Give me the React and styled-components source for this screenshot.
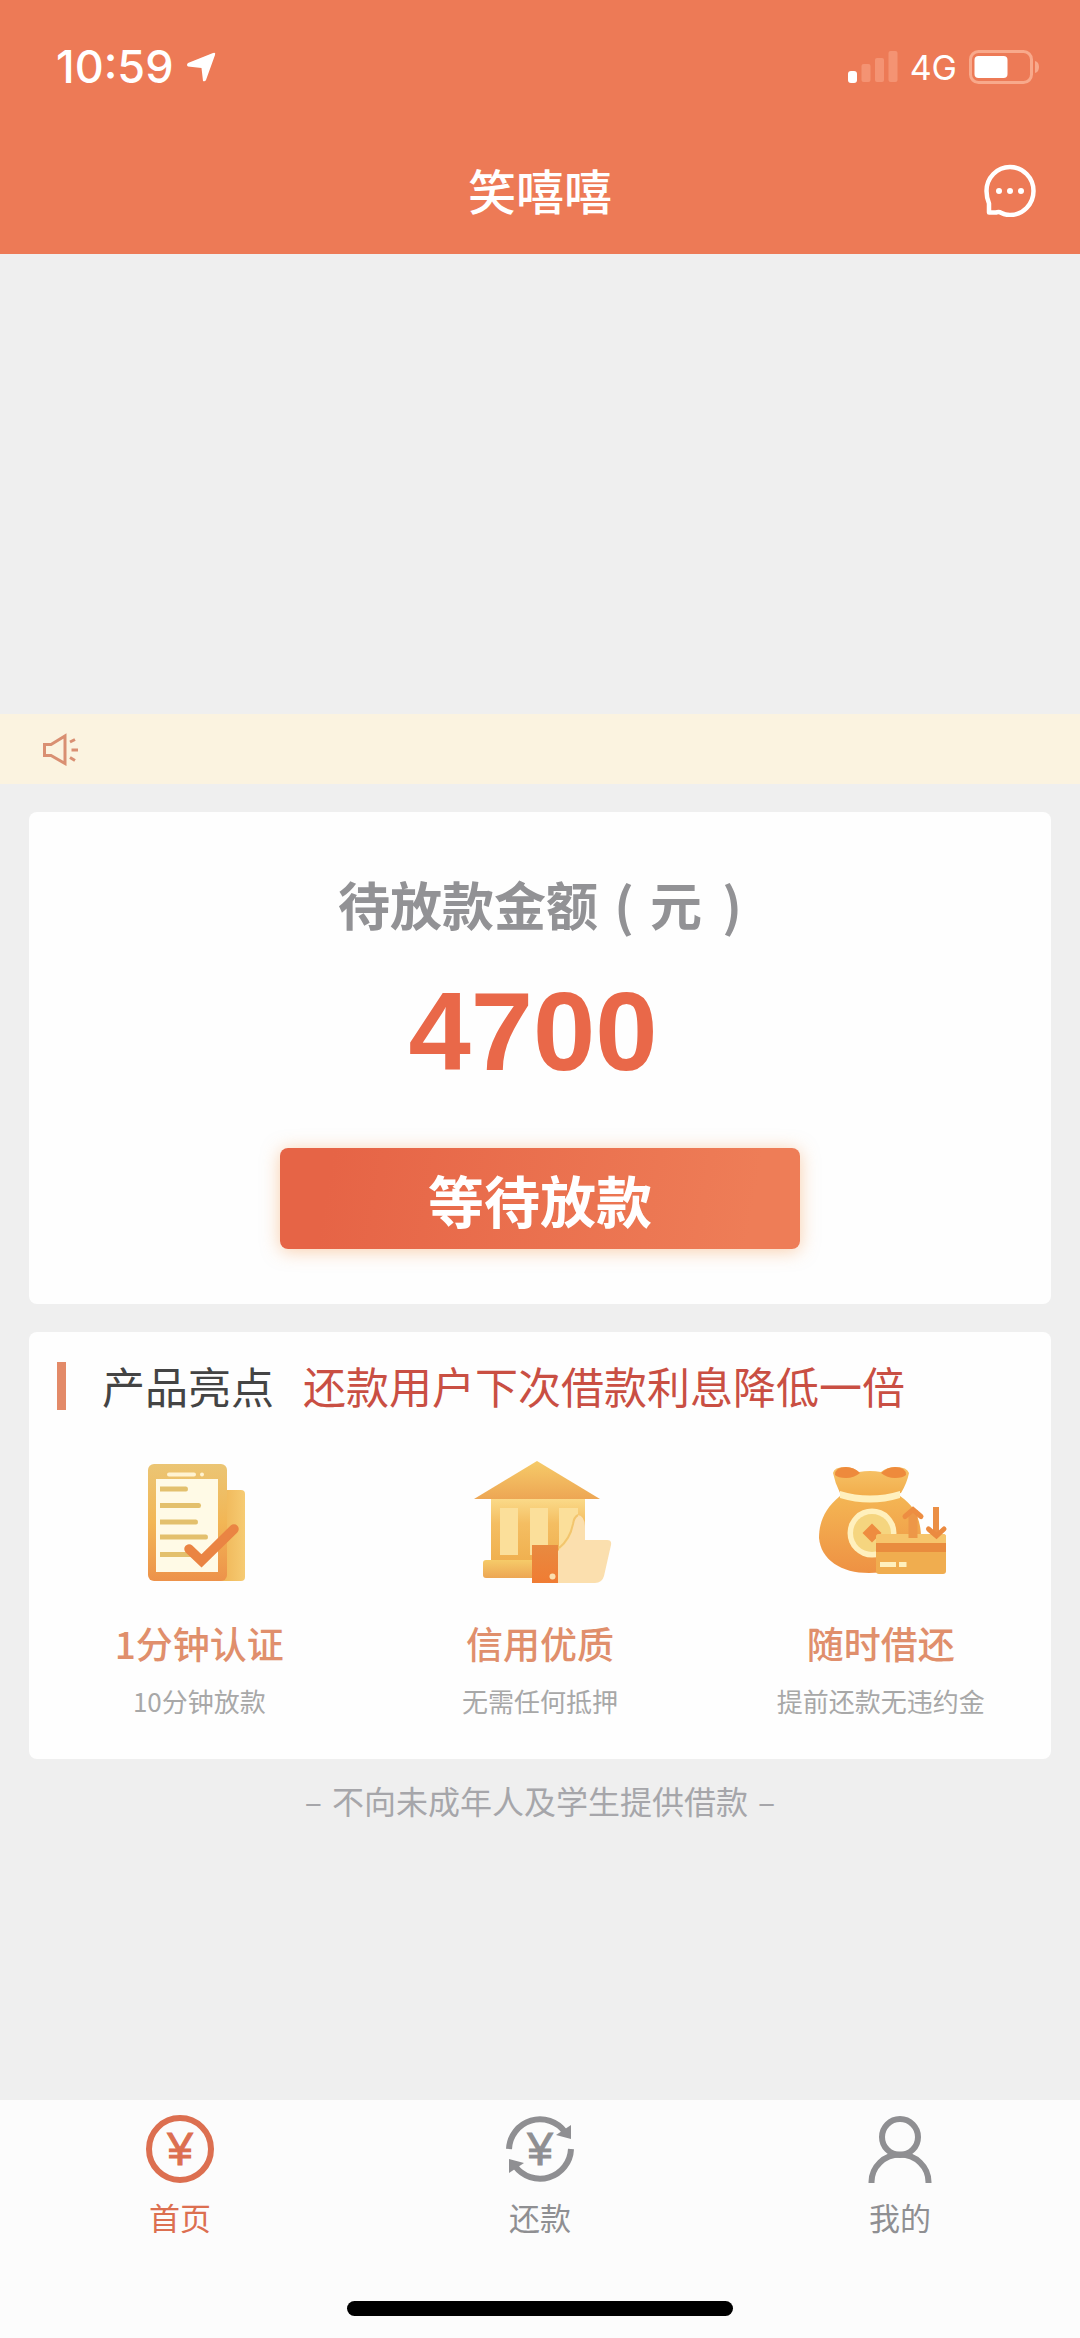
import React from 'react'
import styled, { createGlobalStyle } from 'styled-components'

const GlobalStyle = createGlobalStyle`
  * {
    box-sizing: border-box;
  }

  body {
    margin: 0;
    background-color: #efefef;
    font-family: "Noto Sans CJK SC", "Noto Sans", sans-serif;
  }

  h1, h2, h3, p {
    margin: 0;
  }

  svg {
    display: block;
  }
`

const Page = styled.div`
  display: flex;
  flex-direction: column;
  min-height: 100vh;
`

const Header = styled.header`
  padding-bottom: 8px;
  background-color: #ed7a56;
  color: #fff;
`

const StatusBar = styled.div`
  display: flex;
  justify-content: space-between;
  align-items: center;
  height: 134px;
  padding: 0 40px 0 56px;
  font-family: Inter, sans-serif;
`

const StatusGroup = styled.div`
  display: flex;
  align-items: center;
  gap: 12px;
`

const Time = styled.span`
  font-size: 45px;
  font-weight: 500;
  line-height: 54px;
`

const Network = styled.span`
  font-size: 34px;
`

const TitleBar = styled.div`
  display: grid;
  grid-template-columns: 1fr auto 1fr;
  align-items: center;
  height: 112px;
  padding: 0 44px;
`

const Title = styled.h1`
  grid-column: 2;
  padding-bottom: 2px;
  font-size: 48px;
  font-weight: 500;
  line-height: 60px;
`

const ChatButton = styled.button`
  justify-self: end;
  padding: 0;
  border: none;
  background: none;
  color: inherit;
  cursor: pointer;
`

const Banner = styled.section`
  height: 460px;
`

const Notice = styled.div`
  display: flex;
  align-items: center;
  height: 70px;
  padding: 0 42px;
  background-color: #fbf3e0;
`

const Main = styled.main`
  flex: 1;
`

const Card = styled.section`
  margin: 28px 29px 0;
  border-radius: 8px;
  background-color: #fefefe;
`

const LoanCard = styled(Card)`
  display: flex;
  flex-direction: column;
  align-items: center;
  padding: 62px 28px 55px;
`

const LoanTitle = styled.h2`
  color: #929295;
  font-size: 52px;
  font-weight: 700;
  line-height: 60px;
`

const Paren = styled.span`
  display: inline-block;
  width: 52px;
  text-align: center;

  &:last-child {
    width: 40px;
    text-align: right;
  }
`

const Amount = styled.p`
  margin-top: 42px;
  padding-right: 14px;
  color: #e96849;
  font-family: "Liberation Sans", Arial, sans-serif;
  font-size: 112px;
  font-weight: 700;
  line-height: 112px;
`

const WaitButton = styled.button`
  width: 520px;
  max-width: 100%;
  height: 101px;
  margin-top: 60px;
  padding: 0;
  border: none;
  border-radius: 8px;
  background: linear-gradient(100deg, #e66446 10%, #ee7d57 90%);
  box-shadow: 0 2px 18px rgba(245, 160, 90, 0.5);
  color: #fff;
  font-family: inherit;
  font-size: 56px;
  font-weight: 700;
  line-height: 60px;
  cursor: pointer;
`

const FeatureCard = styled(Card)`
  padding: 30px 0 42px;
`

const FeatureHeader = styled.div`
  display: flex;
  align-items: center;
  height: 48px;
  padding: 0 28px;
  gap: 29px;
  font-size: 43px;
  line-height: 44px;

  &::before {
    content: '';
    width: 9px;
    height: 48px;
    margin-right: 7px;
    background-color: #e38a68;
  }
`

const FeatureTitle = styled.h2`
  padding-bottom: 3px;
  color: #444;
  font-size: inherit;
  font-weight: 400;
`

const FeatureHint = styled.p`
  padding-bottom: 3px;
  color: #c94f43;
`

const FeatureList = styled.div`
  display: grid;
  grid-template-columns: repeat(3, 1fr);
  margin-top: 46px;
`

const Feature = styled.div`
  display: flex;
  flex-direction: column;
  align-items: center;
`

const FeatureName = styled.h3`
  margin-top: 33px;
  color: #e08f6c;
  font-size: 37px;
  font-weight: 500;
  line-height: 44px;
`

const FeatureText = styled.p`
  margin-top: 20px;
  color: #a8a8a8;
  font-size: 26px;
  line-height: 32px;
`

const Disclaimer = styled.p`
  display: flex;
  justify-content: center;
  gap: 10px;
  margin-top: 21px;
  color: #a6a6aa;
  font-size: 32px;
  line-height: 40px;
`

const TabBar = styled.nav`
  padding: 13px 0 22px;
  background-color: #fcfcfc;
`

const Tabs = styled.div`
  display: grid;
  grid-template-columns: repeat(3, 1fr);
`

const Tab = styled.a`
  display: flex;
  flex-direction: column;
  align-items: center;
  gap: 12px;
  color: ${props => (props.$active ? '#dc6f50' : '#8f8f92')};
  font-size: 31px;
  line-height: 40px;
  text-decoration: none;
`

const HomeIndicator = styled.div`
  width: 386px;
  height: 15px;
  margin: 64px auto 0;
  border-radius: 8px;
  background-color: #000;
`

const YenSign = styled.text`
  font-family: "Liberation Sans", Arial, sans-serif;
  font-size: 46px;
  stroke: currentColor;
  stroke-width: 1px;
  text-anchor: middle;
`

const LocationIcon = () => (
  <svg width="30" height="30" viewBox="0 0 30 30" fill="#fff">
    <path d="M27 1 Q30 0 29 3 L20 28 Q19 30 17 29 L15.500 16 L2 14.500 Q0 13 2 11 Z" />
  </svg>
)

const SignalIcon = () => (
  <svg width="50" height="32" viewBox="0 0 50 32" fill="#fff">
    <rect x="0" y="20" width="9" height="12" rx="3" />
    <g fill="#f49373">
      <rect x="13.500" y="13" width="9" height="18" rx="2" />
      <rect x="27" y="7" width="9" height="24" rx="2" />
      <rect x="40.500" y="0" width="9" height="31" rx="2" />
    </g>
  </svg>
)

const BatteryIcon = () => (
  <svg width="71" height="34" viewBox="0 0 71 34">
    <rect x="1.500" y="1.500" width="61" height="31" rx="8" fill="none" stroke="#f8a98b" strokeWidth="3" />
    <rect x="5.500" y="6" width="33" height="22" rx="4" fill="#fff" />
    <path d="M66 11 Q70 12 70 17 Q70 22 66 23 Z" fill="#f8a98b" />
  </svg>
)

const ChatIcon = () => (
  <svg width="54" height="54" viewBox="0 0 54 54" fill="none" stroke="#fff">
    <path
      d="M7 49.500 V40.500 Q4.500 34 4.500 28 A23.500 24 0 1 1 28 52 Q23 52 19.500 50 Q17 48.500 14 49.500 Z"
      strokeWidth="4.500"
      strokeLinejoin="round"
    />
    <g fill="#fff" stroke="none">
      <circle cx="17" cy="28" r="3" />
      <circle cx="28" cy="28" r="3" />
      <circle cx="39" cy="28" r="3" />
    </g>
  </svg>
)

const HornIcon = () => (
  <svg width="38" height="34" viewBox="0 0 38 34" fill="none" stroke="#d98f72" strokeWidth="3">
    <path d="M2.500 12.500 H9 L23 4 V31.500 L9 23.500 H2.500 Z" />
    <path d="M28 10 L33 7.500 M29.500 18 H36 M28 25.500 L33 28.500" />
  </svg>
)

const DocumentIcon = () => (
  <svg width="144" height="132" viewBox="0 0 144 132">
    <defs>
      <linearGradient id="phone" x1="0" y1="0" x2="0" y2="1">
        <stop offset="0" stopColor="#ebc574" />
        <stop offset="0.500" stopColor="#f2b655" />
        <stop offset="1" stopColor="#ed924a" />
      </linearGradient>
      <linearGradient id="sheet" x1="0" y1="0" x2="1" y2="0">
        <stop offset="0" stopColor="#eeb04f" />
        <stop offset="1" stopColor="#f6cb73" />
      </linearGradient>
    </defs>
    <rect x="88" y="34" width="30" height="91" rx="4" fill="url(#sheet)" />
    <rect x="21" y="8" width="79" height="117" rx="6" fill="url(#phone)" />
    <rect x="40" y="16.500" width="29" height="4" rx="2" fill="#fff3d2" />
    <circle cx="75" cy="18.500" r="2" fill="#fff3d2" />
    <rect x="29" y="23" width="62" height="93" fill="#fffae6" />
    <g fill="#e3c06d">
      <path d="M33 30.500 H59 Q61 30.500 61 33 Q61 35.500 59 35.500 H33 Z" />
      <path d="M33 47 H72 Q74 47 74 49.500 Q74 52 72 52 H33 Z" />
      <path d="M33 63.500 H69 Q71 63.500 71 66 Q71 68.500 69 68.500 H33 Z" />
      <path d="M33 78.500 H79 Q81 78.500 81 81 Q81 83.500 79 83.500 H33 Z" />
      <path d="M33 96 H66 V101 H33 Z" />
    </g>
    <path
      d="M62 93 L74.500 105 L107 73"
      fill="none"
      stroke="#ea8443"
      strokeWidth="9.500"
      strokeLinecap="round"
    />
  </svg>
)

const BankIcon = () => (
  <svg width="144" height="132" viewBox="0 0 144 132">
    <defs>
      <linearGradient id="roof" x1="0" y1="0" x2="0" y2="1">
        <stop offset="0" stopColor="#f6cb69" />
        <stop offset="1" stopColor="#eda654" />
      </linearGradient>
      <linearGradient id="wall" x1="0" y1="0" x2="0" y2="1">
        <stop offset="0" stopColor="#fbdb8a" />
        <stop offset="0.400" stopColor="#f4be62" />
        <stop offset="1" stopColor="#f0b04f" />
      </linearGradient>
      <linearGradient id="cuff" x1="0" y1="0" x2="0" y2="1">
        <stop offset="0" stopColor="#e88a40" />
        <stop offset="1" stopColor="#f07c33" />
      </linearGradient>
    </defs>
    <rect x="23" y="42" width="94" height="63" fill="url(#wall)" />
    <g fill="#fbdf9a">
      <rect x="32" y="52" width="18" height="47" />
      <rect x="62" y="52" width="18" height="47" />
      <rect x="91" y="52" width="19" height="47" />
    </g>
    <rect x="15" y="104" width="56" height="18" rx="3" fill="url(#roof)" />
    <path d="M69 5 L132 43 H6 Z" fill="url(#roof)" />
    <path
      d="M90 95 Q104 84 105 70 Q105 60 110 59 Q117 60 117 72 V84 H139 Q144 84 143 89 L136 120 Q134 127 127 127 H90 Z"
      fill="#fbdfae"
    />
    <path d="M91 92 Q102 83 105 68 Q106 61 110 59" fill="none" stroke="#f2c56d" strokeWidth="2" />
    <rect x="64" y="89" width="26" height="38" fill="url(#cuff)" />
    <circle cx="84.500" cy="120.500" r="3" fill="#fbdfae" />
  </svg>
)

const MoneyBagIcon = () => (
  <svg width="144" height="132" viewBox="0 0 144 132">
    <defs>
      <linearGradient id="bag" x1="0" y1="0" x2="0" y2="1">
        <stop offset="0" stopColor="#f4b654" />
        <stop offset="1" stopColor="#ee9143" />
      </linearGradient>
      <linearGradient id="neck" x1="0" y1="0" x2="0" y2="1">
        <stop offset="0" stopColor="#f6c368" />
        <stop offset="1" stopColor="#f2ad4b" />
      </linearGradient>
    </defs>
    <path d="M31 40 C16 52 10 66 10 82 C12 104 32 117 60 117 C90 117 110 104 112 82 C112 64 106 50 91 40 Z" fill="url(#bag)" />
    <path
      d="M24 17 Q25 11 36 11 Q44 11 50 16 Q61 14 72 16 Q78 11 87 11 Q98 11 100 17 Q98 27 92 37 Q61 44 31 37 Q26 27 24 17 Z"
      fill="url(#neck)"
    />
    <path d="M26 19 Q26 11 37 11 Q45 11 51 17 Q45 22 37 22 Q29 22 26 19 Z" fill="#ee8a3c" />
    <path d="M97 19 Q97 11 86 11 Q78 11 72 17 Q78 22 86 22 Q94 22 97 19 Z" fill="#ee8a3c" />
    <path d="M31 35 Q61 44 91 35 V42 Q61 51 31 42 Z" fill="#fff0bd" />
    <circle cx="63" cy="77" r="24.500" fill="#fff0bd" />
    <circle cx="63" cy="77" r="19" fill="#f5d57f" />
    <path d="M63 67.500 L72.500 77 L63 86.500 L53.500 77 Z" fill="#ee8c40" />
    <rect x="67" y="78" width="70" height="40" rx="3" fill="#f0ad4f" />
    <path d="M67 87 V81 Q67 78 70 78 H134 Q137 78 137 81 V87 Z" fill="#f6c56c" />
    <rect x="67" y="87" width="70" height="9" fill="#e98c3e" />
    <path d="M71 108.500 H87 M90 108.500 H97.500" stroke="#fff0bd" strokeWidth="5" />
    <path d="M104 54 V82" stroke="#ed9748" strokeWidth="9" />
    <path d="M96 60.500 L104 53.500 L112 60.500" fill="none" stroke="#ed8d42" strokeWidth="5" strokeLinecap="round" />
    <path d="M127 51 V77" stroke="#eb8f45" strokeWidth="6" />
    <path d="M119.500 73 L127.500 80 L135 73" fill="none" stroke="#eb8a40" strokeWidth="5" strokeLinecap="round" />
  </svg>
)

const HomeIcon = () => (
  <svg width="72" height="72" viewBox="0 0 72 72" fill="currentColor">
    <circle cx="36" cy="36" r="31" fill="none" stroke="currentColor" strokeWidth="6" />
    <YenSign x="36" y="52">¥</YenSign>
  </svg>
)

const RepayIcon = () => (
  <svg width="72" height="72" viewBox="0 0 72 72" fill="currentColor">
    <g fill="none" stroke="currentColor" strokeWidth="6">
      <path d="M5 36 A31 31 0 0 1 61 19" />
      <path d="M67 36 A31 31 0 0 1 11 53" />
    </g>
    <path d="M67 12 V26 L52 22 Z" />
    <path d="M5 60 V46 L20 50 Z" />
    <YenSign x="36" y="52">¥</YenSign>
  </svg>
)

const UserIcon = () => (
  <svg width="72" height="72" viewBox="0 0 72 72" fill="none" stroke="currentColor" strokeWidth="6">
    <circle cx="36" cy="24" r="18" />
    <path d="M7.500 70 V69 A28.500 27.500 0 0 1 64.500 69 V70" />
  </svg>
)

const features = [
  { name: '1分钟认证', text: '10分钟放款', Icon: DocumentIcon },
  { name: '信用优质', text: '无需任何抵押', Icon: BankIcon },
  { name: '随时借还', text: '提前还款无违约金', Icon: MoneyBagIcon },
]

const tabs = [
  { label: '首页', href: '#home', Icon: HomeIcon, active: true },
  { label: '还款', href: '#repay', Icon: RepayIcon },
  { label: '我的', href: '#mine', Icon: UserIcon },
]

function App() {
  return (
    <>
      <GlobalStyle />
      <Page>
        <Header>
          <StatusBar>
            <StatusGroup>
              <Time>10:59</Time>
              <LocationIcon />
            </StatusGroup>
            <StatusGroup>
              <SignalIcon />
              <Network>4G</Network>
              <BatteryIcon />
            </StatusGroup>
          </StatusBar>
          <TitleBar>
            <Title>笑嘻嘻</Title>
            <ChatButton type="button" aria-label="消息">
              <ChatIcon />
            </ChatButton>
          </TitleBar>
        </Header>

        <Main>
          <Banner />
          <Notice>
            <HornIcon />
          </Notice>

          <LoanCard>
            <LoanTitle>
              待放款金额<Paren>(</Paren>元<Paren>)</Paren>
            </LoanTitle>
            <Amount>4700</Amount>
            <WaitButton type="button">等待放款</WaitButton>
          </LoanCard>

          <FeatureCard>
            <FeatureHeader>
              <FeatureTitle>产品亮点</FeatureTitle>
              <FeatureHint>还款用户下次借款利息降低一倍</FeatureHint>
            </FeatureHeader>
            <FeatureList>
              {features.map(({ name, text, Icon }) => (
                <Feature key={name}>
                  <Icon />
                  <FeatureName>{name}</FeatureName>
                  <FeatureText>{text}</FeatureText>
                </Feature>
              ))}
            </FeatureList>
          </FeatureCard>

          <Disclaimer>
            <span>–</span>
            <span>不向未成年人及学生提供借款</span>
            <span>–</span>
          </Disclaimer>
        </Main>

        <TabBar>
          <Tabs>
            {tabs.map(({ label, href, Icon, active }) => (
              <Tab key={label} href={href} $active={active}>
                <Icon />
                {label}
              </Tab>
            ))}
          </Tabs>
          <HomeIndicator />
        </TabBar>
      </Page>
    </>
  )
}

export default App
